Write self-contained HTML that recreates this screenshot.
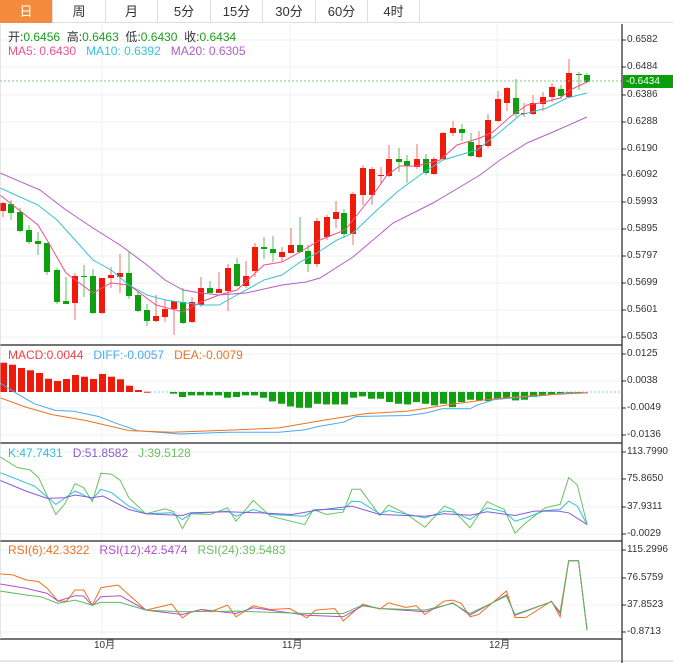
<!DOCTYPE html>
<html><head><meta charset="utf-8"><style>
*{margin:0;padding:0;box-sizing:border-box}
body{width:673px;height:663px;background:#fff;font-family:"Liberation Sans","Noto Sans CJK SC",sans-serif;overflow:hidden;position:relative}
.tabs{position:absolute;left:0;top:0;width:673px;height:23px;border-bottom:1px solid #ddd;background:#fff}
.tab{position:absolute;top:0;height:23px;line-height:23px;text-align:center;font-size:13px;color:#333;border-right:1px solid #ddd}
.tab.on{background:#f28b3b;color:#fff}
.lg{position:absolute;font-size:12px;white-space:nowrap;line-height:14px}
.ax{position:absolute;left:627px;font-size:10px;color:#333;line-height:10px}
svg{position:absolute;left:0;top:0}
</style></head><body>
<div class="tabs">
<div class="tab on" style="left:0;width:53px">日</div>
<div class="tab" style="left:53px;width:53px">周</div>
<div class="tab" style="left:106px;width:52px">月</div>
<div class="tab" style="left:158px;width:53px">5分</div>
<div class="tab" style="left:211px;width:52px">15分</div>
<div class="tab" style="left:263px;width:53px">30分</div>
<div class="tab" style="left:316px;width:52px">60分</div>
<div class="tab" style="left:368px;width:52px">4时</div>
</div>
<svg id="s" width="673" height="663"></svg>
<div class="lg" style="left:8px;top:30px;color:#333">开:<span style="color:#1a9e1a">0.6456</span>&nbsp; 高:<span style="color:#1a9e1a">0.6463</span>&nbsp; 低:<span style="color:#1a9e1a">0.6430</span>&nbsp; 收:<span style="color:#1a9e1a">0.6434</span></div>
<div class="lg" style="left:8px;top:44px"><span style="color:#f0508a">MA5: 0.6430</span>&nbsp;&nbsp; <span style="color:#36c2d8">MA10: 0.6392</span>&nbsp;&nbsp; <span style="color:#b45cc8">MA20: 0.6305</span></div>
<div class="lg" style="left:8px;top:348px"><span style="color:#f04040">MACD:0.0044</span>&nbsp;&nbsp; <span style="color:#4aa8f0">DIFF:-0.0057</span>&nbsp;&nbsp; <span style="color:#f07020">DEA:-0.0079</span></div>
<div class="lg" style="left:8px;top:446px"><span style="color:#2ec0d8">K:47.7431</span>&nbsp;&nbsp; <span style="color:#8a5ad0">D:51.8582</span>&nbsp;&nbsp; <span style="color:#6cc060">J:39.5128</span></div>
<div class="lg" style="left:8px;top:543px"><span style="color:#f07020">RSI(6):42.3322</span>&nbsp;&nbsp; <span style="color:#b050c8">RSI(12):42.5474</span>&nbsp;&nbsp; <span style="color:#6cc060">RSI(24):39.5483</span></div>
<div id="axes"></div>
<div style="position:absolute;left:623px;top:75px;width:50px;height:13px;background:#0a9e0a;color:#fff;font-size:10px;line-height:13px;padding-left:3px">-0.6434</div>
<script>
var s=document.getElementById('s'),h='';
function L(x1,y1,x2,y2,c,w,d){h+='<line x1="'+x1+'" y1="'+y1+'" x2="'+x2+'" y2="'+y2+'" stroke="'+c+'" stroke-width="'+(w||1)+'"'+(d?' stroke-dasharray="'+d+'"':'')+'/>';}
function R(x,y,w,hh,c){h+='<rect x="'+x+'" y="'+y+'" width="'+w+'" height="'+Math.max(hh,1)+'" fill="'+c+'"/>';}
function P(pts,c,sx,sy,oy){var a=[];for(var i=0;i<pts.length;i+=2)a.push((pts[i]*(sx||1)).toFixed(1)+','+((oy||0)+pts[i+1]*(sy||1)).toFixed(1));h+='<polyline fill="none" stroke="'+c+'" stroke-width="1" points="'+a.join(' ')+'"/>';}
var mainY=[40,67,95,122,149,175,202,229,256,283,310,337],mainL=['0.6582','0.6484','0.6386','0.6288','0.6190','0.6092','0.5993','0.5895','0.5797','0.5699','0.5601','0.5503'];
var ax='';
function grid(ys,ls){ys.forEach(function(y,i){L(0,y,622,y,'#eef2f4');L(622,y,626,y,'#333');ax+='<div class="ax" style="top:'+(y-5)+'px">'+ls[i]+'</div>';});}
grid(mainY,mainL);
grid([354,381,408,435],['0.0125','0.0038','-0.0049','-0.0136']);
grid([452,479,507,534],['113.7990','75.8650','37.9311','-0.0029']);
grid([550,578,605,632],['115.2996','76.5759','37.8523','-0.8713']);
[102,290,497].forEach(function(x){L(x,24,x,639,'#eef2f4');});
document.getElementById('axes').innerHTML=ax+'<div class="ax" style="left:94px;top:641px">10月</div><div class="ax" style="left:282px;top:641px">11月</div><div class="ax" style="left:489px;top:641px">12月</div>';
var red='#f01a0a',grn='#0ea00e';
var C=[[3,203,211,202,217,'r'],[11,204,213,200,220,'g'],[20,212,231,208,232,'g'],[29,230,242,225,244,'g'],[38,241,244,232,255,'g'],[47,243,272,243,275,'g'],[57,270,302,268,304,'g'],[66,301,304,277,304,'g'],[75,276,303,273,320,'r'],[84,276,277,265,297,'g'],[93,276,313,269,314,'g'],[102,278,313,278,314,'r'],[111,275,278,267,288,'r'],[120,273,277,254,293,'r'],[129,273,296,252,299,'g'],[138,295,311,291,312,'g'],[147,310,321,304,326,'g'],[156,316,321,295,322,'r'],[165,309,317,299,322,'r'],[174,301,309,301,335,'r'],[183,302,323,288,324,'g'],[192,302,322,297,323,'r'],[201,288,305,277,307,'r'],[210,288,293,281,293,'g'],[219,289,293,272,293,'r'],[228,268,291,264,311,'r'],[237,264,286,258,287,'g'],[246,276,286,261,288,'r'],[255,247,271,243,277,'r'],[264,247,249,237,259,'g'],[273,249,253,236,262,'g'],[282,252,257,247,262,'r'],[291,245,253,228,253,'r'],[300,245,252,217,253,'g'],[308,251,264,245,272,'g'],[317,221,264,218,267,'r'],[327,217,237,215,240,'r'],[336,212,219,201,228,'r'],[344,213,234,209,238,'g'],[353,194,234,192,245,'r'],[363,168,195,165,205,'r'],[372,169,195,167,205,'r'],[381,175,176,167,184,'r'],[389,159,176,145,177,'r'],[399,159,162,148,172,'g'],[407,161,166,155,183,'g'],[417,159,167,144,169,'r'],[426,159,173,154,175,'g'],[434,159,174,157,175,'r'],[443,133,159,132,160,'r'],[453,128,133,121,136,'r'],[462,129,133,124,141,'g'],[471,142,156,133,157,'g'],[479,145,157,131,158,'r'],[488,120,146,114,148,'r'],[498,99,121,91,122,'r'],[507,88,103,87,111,'r'],[516,98,114,79,117,'g'],[524,113,114,103,117,'r'],[533,103,114,95,115,'r'],[543,97,104,92,111,'r'],[552,87,97,83,102,'r'],[561,89,96,85,99,'g'],[569,73,97,59,98,'r'],[579,74,75,72,90,'g'],[587,75,82,73,83,'g']];
C.forEach(function(c){var col=c[5]=='r'?red:grn;L(c[0],c[3],c[0],c[4],c[5]=='r'?'#f07070':'#5cc05c');R(c[0]-3,c[1],6,c[2]-c[1],col);});
L(0,81,622,81,'#7cc87c',1,'2,2');
P([0,195,38,225,47,240,66,273,93,293,111,283,129,285,156,305,183,312,201,302,219,295,237,290,264,265,282,262,300,252,320,240,345,230,353,220,373,195,387,175,400,166,417,166,440,160,457,145,480,138,493,132,510,117,527,105,540,103,560,98,570,90,587,82],'#f0508a');
P([0,188,38,205,57,220,75,240,93,260,111,270,129,285,147,295,165,300,201,305,219,305,237,295,264,280,282,275,300,262,317,253,337,240,353,233,377,210,397,192,420,175,443,160,477,150,500,132,520,115,547,108,567,98,587,93],'#36c2d8');
P([0,173,40,190,66,210,93,228,120,245,147,265,165,280,183,290,201,293,219,295,246,293,282,285,306,282,320,278,353,257,393,223,433,203,460,187,480,175,500,160,527,143,553,132,587,117],'#b45cc8');
var rt=[362.7,364.7,368,370.3,373,378.7,381,379,375,376.7,379,374,376.7,379.3,385.7,390,391.7];
rt.forEach(function(t,i){R(i*9,t,7,392-t,red);});
L(150,392,622,392,'#8ad0e8',1,'2,2');
var gb=[160,170,165,165,165,165,172,170,165,165,172,183,190,198,202,202,190,192,192,192,172,168,175,175,185,190,192,185,190,195,190,200,185,178,180,182,175,172,180,178,170,165,162,160,158,157];
gb.forEach(function(b,i){var y=340+b/2.98;R(170+i*9,392,7,y-392,grn);});
var sx=1/2.33,sy=1/2.98;
P([0,128,40,160,80,190,130,210,170,212,230,228,270,248,320,270,420,280,530,275,650,275,710,268,740,258,800,245,830,228,950,225,990,218,1030,205,1095,205,1110,195,1150,178,1200,172,1270,165,1320,157,1370,157],'#4aa8f0',sx,sy,340);
P([0,172,60,200,120,222,200,240,300,270,400,275,550,268,650,262,750,240,850,220,950,212,1050,192,1150,175,1250,165,1370,157],'#f07020',sx,sy,340);
P([0,348,40,380,70,387,90,410,130,520,150,490,175,428,195,440,215,482,235,397,260,400,280,418,300,470,340,518,385,503,405,512,425,562,445,518,490,520,530,500,550,540,590,478,630,525,710,550,730,505,760,520,800,513,820,445,840,445,885,523,905,492,945,517,990,558,1035,495,1055,505,1095,560,1135,482,1175,505,1200,575,1225,545,1270,500,1305,490,1325,410,1345,432,1368,550],'#6cc060',sx,sy,340);
P([0,395,40,415,80,435,130,490,175,450,215,475,235,445,260,455,300,495,340,518,400,515,425,535,445,518,530,510,550,525,590,505,630,520,710,525,735,505,800,505,820,480,840,482,885,518,905,508,990,530,1035,510,1055,512,1095,535,1135,500,1175,512,1200,540,1225,530,1270,508,1305,505,1325,480,1345,495,1368,550],'#2ec0d8',sx,sy,340);
P([0,418,60,450,110,472,150,470,175,462,215,470,240,465,300,505,340,518,425,523,445,515,530,512,600,515,680,520,735,508,820,495,885,520,990,525,1035,518,1095,522,1135,512,1200,523,1245,510,1300,510,1325,515,1368,550],'#8a5ad0',sx,sy,340);
P([0,697,30,700,60,715,90,720,110,740,135,778,155,778,175,745,195,745,215,790,235,738,275,730,340,805,400,787,425,828,445,810,470,803,490,810,530,790,550,825,590,792,630,803,675,800,715,828,735,805,780,800,800,837,845,787,885,802,905,783,945,797,970,792,990,818,1035,778,1055,775,1075,785,1095,825,1115,818,1180,748,1200,827,1225,827,1285,778,1305,825,1325,658,1348,658,1368,865],'#f07020',sx,sy,340);
P([0,727,60,740,110,755,135,778,175,762,195,763,215,792,235,765,280,762,340,805,425,818,470,803,550,815,590,798,715,820,800,825,845,792,885,800,990,810,1055,783,1095,820,1180,760,1200,820,1285,780,1305,815,1325,658,1348,658,1368,865],'#b050c8',sx,sy,340);
P([0,748,60,760,95,765,135,785,175,775,215,790,235,782,280,782,340,805,425,810,550,808,715,815,800,815,845,790,885,800,990,805,1055,785,1095,815,1180,763,1200,818,1285,780,1305,810,1325,658,1348,658,1368,865],'#5cb85c',sx,sy,340);
[345,443,541,639].forEach(function(y){L(0,y,622,y,'#222',1.2);});
L(0,661,673,661,'#ddd',1.5);
L(622,24,622,663,'#222',1.2);
L(0,24,0,639,'#ccc');
s.innerHTML=h;
</script>
</body></html>
